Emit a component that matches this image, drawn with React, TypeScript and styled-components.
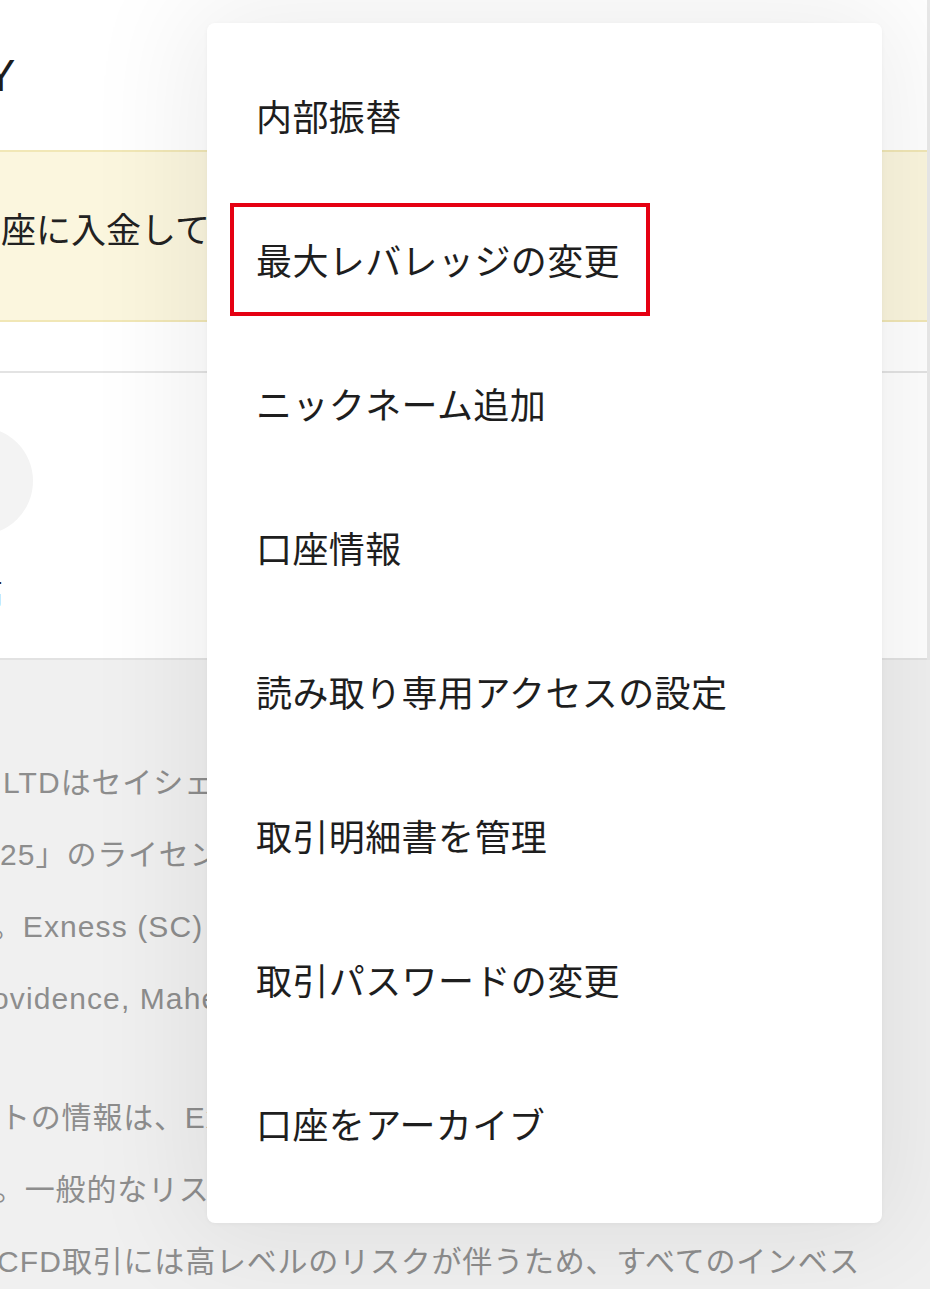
import React from "react";
import styled, { createGlobalStyle } from "styled-components";

const GlobalStyle = createGlobalStyle`
  html, body {
    margin: 0;
    padding: 0;
    background: #e9e9e9;
  }
  body {
    font-family: "Liberation Sans", "Noto Sans CJK JP", sans-serif;
  }
`;

const Viewport = styled.div`
  position: relative;
  width: 930px;
  height: 1289px;
  overflow: hidden;
  background: #e9e9e9;
`;

const Card = styled.section`
  width: 927px;
  height: 660px;
  box-sizing: border-box;
  background: #ffffff;
  border-bottom: 2px solid #e2e2e2;
  display: flex;
  flex-direction: column;
  overflow: hidden;
`;

const Header = styled.header`
  height: 150px;
  box-sizing: border-box;
  padding-top: 50px;
`;

const Title = styled.h1`
  margin: 0 0 0 -14px;
  font-family: "Liberation Sans", sans-serif;
  font-weight: 400;
  font-size: 44px;
  line-height: 52px;
  color: #1d1d1d;
`;

const Banner = styled.div`
  height: 172px;
  box-sizing: border-box;
  background: #fbf6de;
  border-top: 2px solid #f1e7b6;
  border-bottom: 2px solid #f1e7b6;
  padding-top: 54px;
`;

const BannerText = styled.p`
  margin: 0 0 0 1px;
  font-family: "Noto Sans CJK JP", sans-serif;
  font-size: 35px;
  line-height: 44px;
  color: #222;
  white-space: nowrap;
`;

const Spacer = styled.div<{ $h: number }>`
  height: ${(p) => p.$h}px;
  flex: none;
`;

const Divider = styled.hr`
  margin: 0;
  border: none;
  height: 2px;
  background: #e3e3e3;
  flex: none;
`;

const Profile = styled.div`
  flex: 1;
  display: flex;
  flex-direction: column;
  padding-top: 54px;
`;

const Avatar = styled.div`
  width: 108px;
  height: 108px;
  border-radius: 50%;
  background: #f3f3f3;
  margin-left: -75px;
`;

const ProfileLabel = styled.span`
  margin: 36px 0 0 -57px;
  font-family: "Noto Sans CJK JP", sans-serif;
  font-size: 30px;
  line-height: 40px;
  color: #222;
  white-space: nowrap;
`;

const Footer = styled.footer`
  height: 629px;
  box-sizing: border-box;
  background: #f0f0f0;
  padding-top: 87px;
  overflow: hidden;
`;

const Paragraph = styled.div`
  display: flex;
  flex-direction: column;
  & + & {
    margin-top: 47px;
  }
`;

const Line = styled.span<{ $indent: number }>`
  display: block;
  margin-left: ${(p) => p.$indent}px;
  font-family: "Liberation Sans", "Noto Sans CJK JP", sans-serif;
  font-size: 30px;
  line-height: 72px;
  letter-spacing: 0.8px;
  color: #8d8d8d;
  white-space: nowrap;
`;

const Latin = styled.span`
  letter-spacing: 1.1px;
`;

const Menu = styled.nav`
  position: absolute;
  left: 207px;
  top: 23px;
  width: 675px;
  height: 1200px;
  box-sizing: border-box;
  padding: 20px 0 28px;
  background: #ffffff;
  border-radius: 8px;
  box-shadow: 0 0 110px 20px rgba(0, 0, 0, 0.07), 0 1px 4px rgba(0, 0, 0, 0.04);
  display: flex;
  flex-direction: column;
`;

const MenuItem = styled.div`
  position: relative;
  height: 144px;
  display: flex;
  align-items: center;
  padding-left: 49px;
  font-family: "Noto Sans CJK JP", sans-serif;
  font-size: 36px;
  font-weight: 400;
  letter-spacing: 0.4px;
  color: #1e1e1e;
  white-space: nowrap;
  flex: none;
`;

const Highlight = styled.span`
  position: absolute;
  left: 23px;
  top: 16px;
  width: 420px;
  height: 113px;
  box-sizing: border-box;
  border: 4px solid #e50012;
  pointer-events: none;
`;

const items = [
  "内部振替",
  "最大レバレッジの変更",
  "ニックネーム追加",
  "口座情報",
  "読み取り専用アクセスの設定",
  "取引明細書を管理",
  "取引パスワードの変更",
  "口座をアーカイブ",
];

type Seg = { latin?: boolean; text: string };

const para1: [number, Seg[]][] = [
  [3, [{ latin: true, text: "LTD" }, { text: "はセイシェル金融サービス庁により認可" }]],
  [0, [{ latin: true, text: "25" }, { text: "」のライセンスを保有する証券ディーラーです" }]],
  [-8, [{ text: "。" }, { latin: true, text: "Exness (SC) " }, { text: "の登録住所は" }]],
  [-8, [{ latin: true, text: "ovidence, Mahe, Seychelles" }]],
];

const para2: [number, Seg[]][] = [
  [0, [{ text: "トの情報は、" }, { latin: true, text: "Exness" }, { text: "グループのサービスに関する" }]],
  [-6, [{ text: "。一般的なリスクの開示をお読みください。" }]],
  [-3, [{ latin: true, text: "CFD" }, { text: "取引には高レベルのリスクが伴うため、すべてのインベス" }]],
];

const renderLine = ([indent, segs]: [number, Seg[]], key: number) => (
  <Line key={key} $indent={indent}>
    {segs.map((s, i) => (s.latin ? <Latin key={i}>{s.text}</Latin> : <React.Fragment key={i}>{s.text}</React.Fragment>))}
  </Line>
);

export default function App() {
  return (
    <>
      <GlobalStyle />
      <Viewport>
        <Card>
          <Header>
            <Title>Y</Title>
          </Header>
          <Banner>
            <BannerText>座に入金して 取引を開始</BannerText>
          </Banner>
          <Spacer $h={49} />
          <Divider />
          <Profile>
            <Avatar />
            <ProfileLabel>残高</ProfileLabel>
          </Profile>
        </Card>
        <Footer>
          <Paragraph>{para1.map(renderLine)}</Paragraph>
          <Paragraph>{para2.map(renderLine)}</Paragraph>
        </Footer>
        <Menu>
          {items.map((label, i) => (
            <MenuItem key={label}>
              {label}
              {i === 1 && <Highlight />}
            </MenuItem>
          ))}
        </Menu>
      </Viewport>
    </>
  );
}
